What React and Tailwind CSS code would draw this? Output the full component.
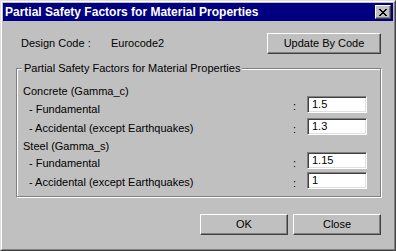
import React from "react";

const font = { fontFamily: '"Liberation Sans", Arial, sans-serif' };

function CloseGlyph() {
  const cells = [
    "11000011",
    "01100110",
    "00111100",
    "00011000",
    "00111100",
    "01100110",
    "11000011",
  ];
  return (
    <svg width="8" height="7" viewBox="0 0 8 7" shapeRendering="crispEdges">
      {cells.map((row, y) =>
        row.split("").map((c, x) =>
          c === "1" ? <rect key={`${x}-${y}`} x={x} y={y} width="1" height="1" fill="#000" /> : null
        )
      )}
    </svg>
  );
}

function Button({ children, className = "" }) {
  return (
    <button
      className={`flex h-[21px] items-center justify-center border-t border-l border-t-white border-l-white border-b border-r border-b-[#404040] border-r-[#404040] bg-[#c0c0c0] text-[11px] leading-[13px] text-black shadow-[inset_-1px_-1px_0_#808080] ${className}`}
    >
      {children}
    </button>
  );
}

function Field({ value }) {
  return (
    <div className="h-[17px] w-[60px] border border-t-[#808080] border-l-[#808080] border-b-white border-r-white bg-white pl-[4px] pt-[1px] text-[11px] leading-[13px] shadow-[inset_1px_1px_0_#404040,inset_-1px_-1px_0_#dfdfdf]">
      {value}
    </div>
  );
}

function Row({ label, value, labelTop, colonTop, height }) {
  return (
    <div className={`flex items-start ${height}`}>
      <span className={`ml-[6px] flex-1 ${labelTop}`}>{label}</span>
      <span className={`mr-[11px] ${colonTop}`}>:</span>
      <Field value={value} />
    </div>
  );
}

export default function App() {
  return (
    <div style={font} className="h-[251px] w-[396px] border border-t-[#dfdfdf] border-l-[#dfdfdf] border-b-[#404040] border-r-[#404040] bg-[#c0c0c0] text-[11px] leading-[13px] text-black">
      <div className="h-full border border-t-white border-l-white border-b-[#808080] border-r-[#808080] p-px">
        <div className="flex h-[18px] items-center justify-between bg-[#000080] pl-[2px] pr-[2px]">
          <span className="text-[12px] font-bold text-white">Partial Safety Factors for Material Properties</span>
          <div className="flex h-[14px] w-[16px] items-center justify-center border-t border-l border-t-white border-l-white border-b border-r border-b-[#404040] border-r-[#404040] bg-[#c0c0c0] shadow-[inset_-1px_-1px_0_#808080]">
            <CloseGlyph />
          </div>
        </div>

        <div className="mt-[12px] flex h-[21px] items-center pl-[18px] pr-[12px]">
          <span className="w-[90px]">Design Code :</span>
          <span>Eurocode2</span>
          <Button className="ml-auto w-[114px]">Update By Code</Button>
        </div>

        <div className="relative ml-[13px] mt-[14px] w-[365px] border border-[#808080] pb-[7px] pl-[6px] pr-[13px] shadow-[inset_1px_1px_0_#fff,1px_1px_0_#fff]">
          <span className="absolute -top-[7px] left-[5px] bg-[#c0c0c0] px-[2px]">
            Partial Safety Factors for Material Properties
          </span>
          <div className="h-[27px] pt-[16px]">Concrete (Gamma_c)</div>
          <Row label="- Fundamental" value="1.5" height="h-[22px]" labelTop="mt-[7px]" colonTop="mt-[4px]" />
          <Row label="- Accidental (except Earthquakes)" value="1.3" height="h-[21px]" labelTop="mt-[4px]" colonTop="mt-[5px]" />
          <div className="h-[13px] pt-px">Steel (Gamma_s)</div>
          <Row label="- Fundamental" value="1.15" height="h-[20px]" labelTop="mt-[5px]" colonTop="mt-[5px]" />
          <Row label="- Accidental (except Earthquakes)" value="1" height="h-[17px]" labelTop="mt-[4px]" colonTop="mt-[5px]" />
        </div>

        <div className="mt-[17px] flex justify-end gap-[5px] pr-[12px]">
          <Button className="w-[88px]">OK</Button>
          <Button className="w-[88px]">Close</Button>
        </div>
      </div>
    </div>
  );
}
